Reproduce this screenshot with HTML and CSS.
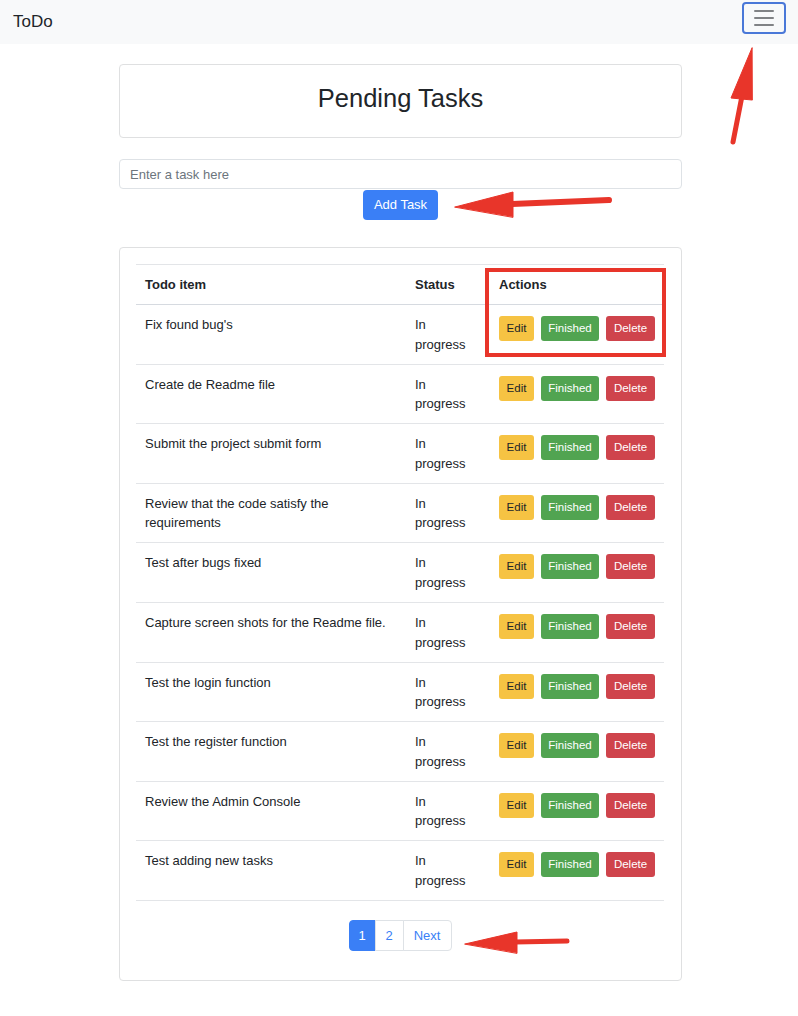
FILE: index.html
```html
<!DOCTYPE html>
<html lang="en">
<head>
<meta charset="utf-8">
<title>ToDo</title>
<link rel="stylesheet" href="styles.css">
</head>
<body>
<nav class="navbar">
  <span class="brand">ToDo</span>
  <button class="toggler" aria-label="Toggle navigation">
    <span class="bar"></span><span class="bar"></span><span class="bar"></span>
  </button>
</nav>

<main class="container">
  <section class="card title-card">
    <h1>Pending Tasks</h1>
  </section>

  <form class="add-form">
    <input class="task-input" type="text" placeholder="Enter a task here">
    <button type="button" class="btn btn-primary">Add Task</button>
  </form>

  <section class="card list-card">
    <table class="tasks">
      <colgroup><col class="c1"><col class="c2"><col class="c3"></colgroup>
      <thead>
        <tr><th>Todo item</th><th>Status</th><th>Actions</th></tr>
      </thead>
      <tbody>
        <tr><td>Fix found bug's</td><td>In<br>progress</td><td><div class="actions"><button class="btn-sm edit">Edit</button><button class="btn-sm fin">Finished</button><button class="btn-sm del">Delete</button></div></td></tr>
        <tr><td>Create de Readme file</td><td>In<br>progress</td><td><div class="actions"><button class="btn-sm edit">Edit</button><button class="btn-sm fin">Finished</button><button class="btn-sm del">Delete</button></div></td></tr>
        <tr><td>Submit the project submit form</td><td>In<br>progress</td><td><div class="actions"><button class="btn-sm edit">Edit</button><button class="btn-sm fin">Finished</button><button class="btn-sm del">Delete</button></div></td></tr>
        <tr><td>Review that the code satisfy the requirements</td><td>In<br>progress</td><td><div class="actions"><button class="btn-sm edit">Edit</button><button class="btn-sm fin">Finished</button><button class="btn-sm del">Delete</button></div></td></tr>
        <tr><td>Test after bugs fixed</td><td>In<br>progress</td><td><div class="actions"><button class="btn-sm edit">Edit</button><button class="btn-sm fin">Finished</button><button class="btn-sm del">Delete</button></div></td></tr>
        <tr><td>Capture screen shots for the Readme file.</td><td>In<br>progress</td><td><div class="actions"><button class="btn-sm edit">Edit</button><button class="btn-sm fin">Finished</button><button class="btn-sm del">Delete</button></div></td></tr>
        <tr><td>Test the login function</td><td>In<br>progress</td><td><div class="actions"><button class="btn-sm edit">Edit</button><button class="btn-sm fin">Finished</button><button class="btn-sm del">Delete</button></div></td></tr>
        <tr><td>Test the register function</td><td>In<br>progress</td><td><div class="actions"><button class="btn-sm edit">Edit</button><button class="btn-sm fin">Finished</button><button class="btn-sm del">Delete</button></div></td></tr>
        <tr><td>Review the Admin Console</td><td>In<br>progress</td><td><div class="actions"><button class="btn-sm edit">Edit</button><button class="btn-sm fin">Finished</button><button class="btn-sm del">Delete</button></div></td></tr>
        <tr><td>Test adding new tasks</td><td>In<br>progress</td><td><div class="actions"><button class="btn-sm edit">Edit</button><button class="btn-sm fin">Finished</button><button class="btn-sm del">Delete</button></div></td></tr>
      </tbody>
    </table>
    <nav class="pager">
      <ul class="pagination">
        <li class="page active">1</li>
        <li class="page">2</li>
        <li class="page">Next</li>
      </ul>
    </nav>
  </section>
</main>

<svg class="annotations" width="798" height="1016" viewBox="0 0 798 1016" aria-hidden="true">
  <g fill="#e8352a" stroke="#e8352a" stroke-linecap="round" stroke-linejoin="round">
    <line x1="733" y1="142" x2="742" y2="96" stroke-width="5"/>
    <polygon points="752,48 731,98 752,100" stroke-width="1"/>
    <line x1="609" y1="200" x2="512" y2="204" stroke-width="6"/>
    <polygon points="455,207 513,192 513,217" stroke-width="1"/>
    <line x1="567" y1="941" x2="515" y2="942" stroke-width="5"/>
    <polygon points="465,944 517,932 517,953" stroke-width="1"/>
  </g>
  <rect x="487" y="270" width="177" height="85" fill="none" stroke="#e8352a" stroke-width="4"/>
</svg>
</body>
</html>
```

FILE: styles.css
```css
* { box-sizing: border-box; }

html, body {
  margin: 0;
  padding: 0;
}

body {
  position: relative;
  width: 798px;
  min-height: 1016px;
  background: #fff;
  color: #212529;
  font-family: "Liberation Sans", Arial, sans-serif;
  font-size: 13px;
  line-height: 1.5;
}

.navbar {
  height: 44px;
  background: #f8f9fa;
  display: flex;
  align-items: center;
  justify-content: space-between;
  padding: 0 12px 0 13px;
}

.brand {
  font-size: 17px;
  color: #212529;
  padding-bottom: 1px;
}

.toggler {
  width: 44px;
  height: 32px;
  margin-bottom: 8px;
  border: 2px solid #4a78d8;
  border-radius: 4px;
  background: transparent;
  display: flex;
  flex-direction: column;
  align-items: center;
  justify-content: center;
  gap: 5px;
  padding: 0;
}

.toggler .bar {
  display: block;
  width: 20px;
  height: 2px;
  background: #808285;
  border-radius: 1px;
}

.container {
  width: 563px;
  margin: 20px 0 0 119px;
}

.card {
  border: 1px solid #dfe0e1;
  border-radius: 4px;
  background: #fff;
}

.title-card {
  height: 74px;
  display: flex;
  align-items: center;
  justify-content: center;
}

.title-card h1 {
  margin: 0 0 6px;
  font-size: 25.5px;
  font-weight: 400;
  line-height: 1.2;
}

.add-form {
  margin-top: 21px;
  display: flex;
  flex-direction: column;
  align-items: center;
  gap: 1px;
}

.task-input {
  width: 100%;
  height: 30px;
  border: 1px solid #dee2e6;
  border-radius: 4px;
  padding: 0 10px;
  font: inherit;
  font-size: 13px;
  color: #212529;
}

.task-input::placeholder {
  color: #6c757d;
}

.btn {
  font: inherit;
  border: 1px solid transparent;
  border-radius: 4px;
  cursor: pointer;
}

.btn-primary {
  height: 30px;
  width: 75px;
  padding: 0;
  background: #3a7ff6;
  color: #fff;
  font-size: 13px;
}

.list-card {
  margin-top: 27px;
  padding: 16px 17px 29px 16px;
}

.tasks {
  width: 528px;
  border-collapse: collapse;
  table-layout: fixed;
}

.tasks col.c1 { width: 270px; }
.tasks col.c2 { width: 84px; }
.tasks col.c3 { width: 174px; }

.tasks th,
.tasks td {
  text-align: left;
  vertical-align: top;
  padding: 10px 9px 9.6px;
  border-bottom: 1px solid #e3e5e8;
  line-height: 19.5px;
}

.tasks thead th {
  font-weight: 700;
  border-top: 1px solid #e3e5e8;
  border-bottom: 1px solid #d6dae0;
}

.actions {
  display: flex;
  gap: 7px;
  padding-top: 1px;
}

.btn-sm {
  height: 25px;
  padding: 0 7px;
  border: 1px solid transparent;
  border-radius: 3px;
  font-family: inherit;
  font-size: 11.5px;
  line-height: 23px;
  cursor: pointer;
}

.btn-sm.edit { background: #f6c343; color: #212529; width: 35px; padding: 0; }
.btn-sm.fin { background: #51a451; color: #fff; width: 58px; padding: 0; }
.btn-sm.del { background: #cf444c; color: #fff; width: 49px; padding: 0; }

.pager {
  display: flex;
  justify-content: center;
  margin-top: 19px;
}

.pagination {
  list-style: none;
  margin: 0;
  padding: 0;
  display: flex;
}

.page {
  height: 31px;
  line-height: 29px;
  padding: 0 9px;
  border: 1px solid #dee2e6;
  margin-left: -1px;
  color: #3a7ff6;
  font-size: 13px;
  background: #fff;
}

.page:first-child {
  margin-left: 0;
  border-radius: 4px 0 0 4px;
}

.page:last-child {
  border-radius: 0 4px 4px 0;
}

.page.active {
  background: #3a7ff6;
  border-color: #3a7ff6;
  color: #fff;
  width: 27px;
  text-align: center;
  padding: 0;
}

.page:nth-child(2) { width: 29px; text-align: center; padding: 0; }
.page:nth-child(3) { width: 49px; text-align: center; padding: 0; }

.annotations {
  position: absolute;
  left: 0;
  top: 0;
  pointer-events: none;
}
```
